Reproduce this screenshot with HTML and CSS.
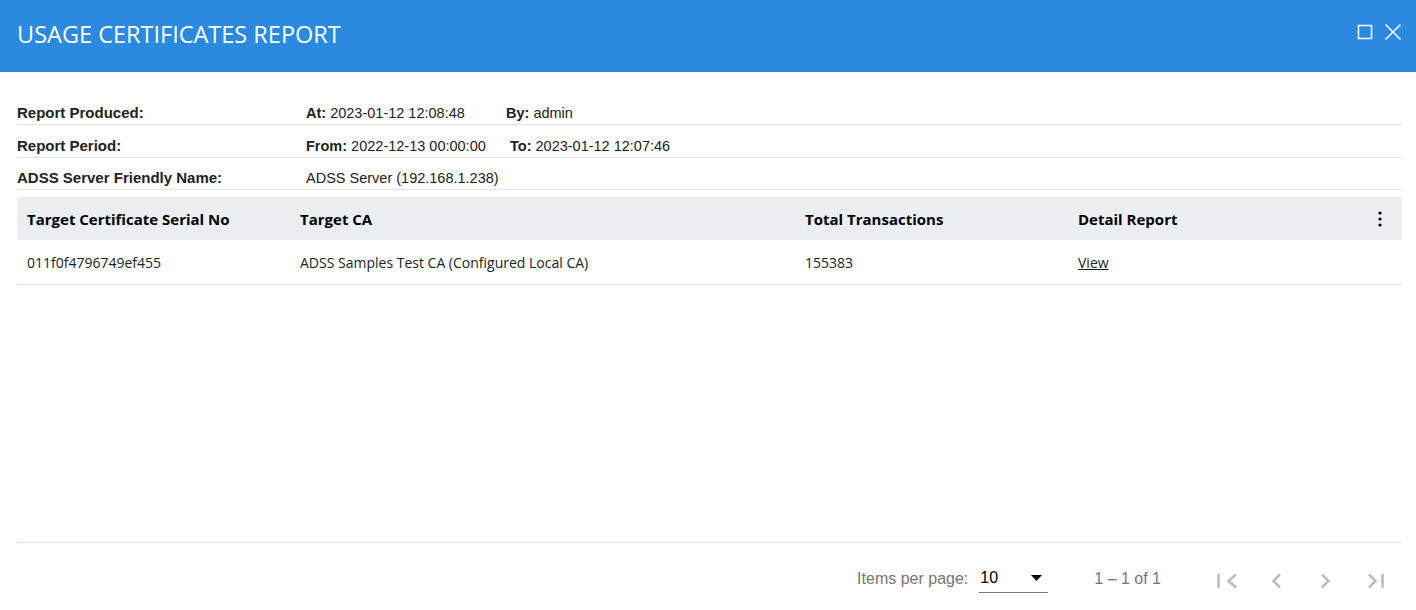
FILE: index.html
```html
<!DOCTYPE html>
<html lang="en">
<head>
    <meta charset="UTF-8">
    <meta name="viewport" content="width=device-width, initial-scale=1.0">
    <title>Usage Certificates Report</title>
    <link rel="stylesheet" href="styles.css">
</head>
<body>

    <div class="dialog">
        <div class="dialog-header">
            <h1>USAGE CERTIFICATES REPORT</h1>
            <div class="window-btns">
                <svg width="16" height="16" viewBox="0 0 16 16"><rect x="1.5" y="1.5" width="13" height="13" fill="none" stroke="#fff" stroke-width="1.5"/></svg>
                <svg width="18" height="18" viewBox="0 0 18 18"><path d="M1.5 1.5L16.5 16.5M16.5 1.5L1.5 16.5" stroke="#fff" stroke-width="1.5" fill="none"/></svg>
            </div>
        </div>

        <div class="dialog-body">
            <div class="info">
                <div class="info-row">
                    <span class="info-label">Report Produced:</span>
                    <span class="info-value first"><b>At:</b> 2023-01-12 12:08:48</span>
                    <span class="info-value"><b>By:</b> admin</span>
                </div>
                <div class="info-row">
                    <span class="info-label">Report Period:</span>
                    <span class="info-value first wide"><b>From:</b> 2022-12-13 00:00:00</span>
                    <span class="info-value"><b>To:</b> 2023-01-12 12:07:46</span>
                </div>
                <div class="info-row">
                    <span class="info-label">ADSS Server Friendly Name:</span>
                    <span class="info-value">ADSS Server (192.168.1.238)</span>
                </div>
            </div>

            <div class="table">
                <div class="tr th">
                    <div class="cell">Target Certificate Serial No</div>
                    <div class="cell">Target CA</div>
                    <div class="cell">Total Transactions</div>
                    <div class="cell last">
                        Detail Report
                        <svg class="kebab" width="4" height="16" viewBox="0 0 4 16"><circle cx="2" cy="2" r="1.6"/><circle cx="2" cy="8" r="1.6"/><circle cx="2" cy="14" r="1.6"/></svg>
                    </div>
                </div>
                <div class="tr">
                    <div class="cell">011f0f4796749ef455</div>
                    <div class="cell">ADSS Samples Test CA (Configured Local CA)</div>
                    <div class="cell">155383</div>
                    <div class="cell"><a href="#">View</a></div>
                </div>
            </div>

            <div class="paginator">
                <span class="pg-label">Items per page:</span>
                <div class="pg-select">
                    <span>10</span>
                    <svg width="11" height="6" viewBox="0 0 11 6"><path d="M0 0h11L5.5 6z" fill="#000"/></svg>
                </div>
                <span class="pg-range">1 &ndash; 1 of 1</span>
                <!-- first / prev / next / last page buttons (all disabled) -->
                <svg class="pg-nav" width="193" height="24" viewBox="0 0 193 24">
                    <path d="M9.5 7v14" />
                    <path d="M27 7.5L19.5 14L27 20.5" />
                    <path d="M71 7.5L64.5 14L71 20.5" />
                    <path d="M113 7.5L119.5 14L113 20.5" />
                    <path d="M160 7.5L166.5 14L160 20.5" />
                    <path d="M173.5 7v14" />
                </svg>
            </div>
        </div>
    </div>

</body>
</html>
```

FILE: styles.css
```css
body {
    margin: 0;
    font-family: 'Liberation Sans', Arial, sans-serif;
    background-color: #fff;
    color: #222;
}
.dialog {
    height: 610px;
    display: flex;
    flex-direction: column;
}
.dialog-header {
    height: 72px;
    box-sizing: border-box;
    background-color: #2b89df;
    display: flex;
    align-items: center;
    justify-content: space-between;
    padding: 0 14px 5px 17px;
}
h1 {
    margin: 0;
    color: #fff;
    font-family: 'Open Sans', sans-serif;
    font-weight: 400;
    font-size: 23.5px;
}
.window-btns {
    display: flex;
    align-items: center;
    gap: 11px;
    margin-top: -3px;
}
.dialog-body {
    flex: 1;
    display: flex;
    flex-direction: column;
    padding: 20px 14px 0 17px;
}
.info-row {
    display: flex;
    align-items: flex-end;
    height: 33px;
    box-sizing: border-box;
    padding-bottom: 3px;
    border-bottom: 1px solid #e2e2e2;
    font-size: 14.5px;
    color: #222;
}
.info-row:last-child {
    height: 32px;
}
.info-label {
    width: 289px;
    font-weight: bold;
    font-size: 15px;
}
.info-value.first {
    width: 200px;
}
.info-value.wide {
    width: 204px;
}
.table {
    margin-top: 7px;
    flex: 1;
    font-family: 'Open Sans', sans-serif;
    font-size: 14px;
}
.tr {
    display: grid;
    grid-template-columns: 273px 505px 273px 1fr;
    height: 44px;
    align-items: center;
    border-bottom: 1px solid #e0e0e0;
    color: #222;
}
.th {
    height: 43px;
    background-color: #eceff1;
    border-bottom: none;
    font-weight: 700;
    font-size: 15px;
    color: #000;
}
.cell {
    padding-left: 10px;
}
.cell.last {
    display: flex;
    align-items: center;
    justify-content: space-between;
    padding-right: 20px;
}
.kebab {
    fill: #000;
}
.cell a {
    color: #222;
}
.paginator {
    border-top: 1px solid #e0e0e0;
    height: 68px;
    display: flex;
    align-items: center;
    justify-content: flex-end;
    padding-top: 4px;
    box-sizing: border-box;
    font-size: 16px;
    color: #757575;
}
.pg-select {
    width: 69px;
    height: 29px;
    margin-left: 11px;
    display: flex;
    align-items: center;
    justify-content: space-between;
    border-bottom: 1px solid #7a7a7a;
    padding: 0 6px 0 1px;
    box-sizing: border-box;
    color: #000;
}
.pg-range {
    margin-left: 46px;
    color: #757575;
}
.pg-nav {
    margin-left: 48px;
}
.pg-nav path {
    fill: none;
    stroke: #bdbdbd;
    stroke-width: 2.6;
}
```
